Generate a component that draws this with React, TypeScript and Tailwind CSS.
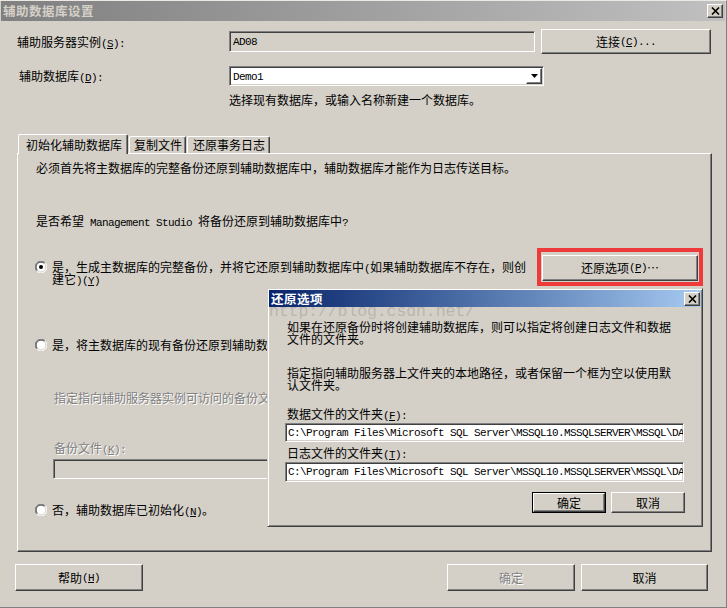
import React from "react";

const raised =
  "border border-t-white border-l-white border-r-[#404040] border-b-[#404040] shadow-[inset_-1px_-1px_0_#808080]";
const sunken =
  "border border-t-[#808080] border-l-[#808080] border-r-white border-b-white shadow-[inset_1px_1px_0_#404040,inset_-1px_-1px_0_#d4d0c8]";
const disabledText = "text-[#808080] [text-shadow:1px_1px_0_#ffffff]";

const M = ({ children }: { children: React.ReactNode }) => (
  <span className="font-['Liberation_Mono',monospace] text-[11px] tracking-[-0.6px]">{children}</span>
);
const U = ({ children }: { children: React.ReactNode }) => (
  <span className="underline underline-offset-1">{children}</span>
);

function Btn({ children, className }: { children: React.ReactNode; className?: string }) {
  return (
    <div className={`flex items-center justify-center bg-[#d4d0c8] whitespace-nowrap ${raised} ${className ?? ""}`}>
      {children}
    </div>
  );
}

function CloseBtn() {
  return (
    <div className={`w-[16px] h-[14px] bg-[#d4d0c8] flex items-center justify-center ${raised}`}>
      <svg width="9" height="8" viewBox="0 0 9 8">
        <path d="M1 0.5 L8 7.5 M8 0.5 L1 7.5" stroke="#000" strokeWidth="1.6" />
      </svg>
    </div>
  );
}

function Radio({ checked }: { checked?: boolean }) {
  return (
    <svg width="12" height="12" viewBox="0 0 12 12" className="shrink-0">
      <circle cx="6" cy="6" r="5.5" fill="#fff" />
      <path d="M10.2 1.8 A5.9 5.9 0 0 0 1.8 10.2" fill="none" stroke="#808080" strokeWidth="1" />
      <path d="M9.5 2.5 A4.9 4.9 0 0 0 2.5 9.5" fill="none" stroke="#404040" strokeWidth="1" />
      <path d="M1.8 10.2 A5.9 5.9 0 0 0 10.2 1.8" fill="none" stroke="#ffffff" strokeWidth="1" />
      <path d="M2.5 9.5 A4.9 4.9 0 0 0 9.5 2.5" fill="none" stroke="#d4d0c8" strokeWidth="1" />
      {checked && <circle cx="6" cy="6" r="2" fill="#000" />}
    </svg>
  );
}

const PATH = "C:\\Program Files\\Microsoft SQL Server\\MSSQL10.MSSQLSERVER\\MSSQL\\DATA";

export default function App() {
  return (
    <div className="relative w-[727px] h-[608px] overflow-hidden bg-[#d4d0c8] text-black text-[12px] leading-[12px] font-['Noto_Sans_CJK_SC',sans-serif] border-t border-t-[#ece9e4] border-r border-r-[#808080] border-b border-b-[#808080] flex flex-col">
      {/* title bar */}
      <div className="h-[20px] shrink-0 mx-[1px] flex items-center justify-between bg-linear-to-r from-[#808080] to-[#c0c0c0] pl-[2px] pr-[2px]">
        <span className="text-[#d4d0c8] font-bold text-[12.5px] tracking-[0.5px]">辅助数据库设置</span>
        <CloseBtn />
      </div>

      {/* row 1 */}
      <div className="mt-[8px] h-[25px] shrink-0 flex items-center">
        <div className="ml-[17px] w-[212px] h-[12px] whitespace-nowrap">
          辅助服务器实例<M>(<U>S</U>):</M>
        </div>
        <div className={`w-[306px] h-[21px] flex items-center pl-[3px] ${sunken}`}>
          <M>AD08</M>
        </div>
        <Btn className="ml-[6px] w-[170px] h-[25px]">
          连接<M>(<U>C</U>)...</M>
        </Btn>
      </div>

      {/* row 2 */}
      <div className="mt-[12px] h-[20px] shrink-0 flex items-center">
        <div className="ml-[19px] w-[210px] h-[12px] whitespace-nowrap">
          辅助数据库<M>(<U>D</U>):</M>
        </div>
        <div className={`w-[315px] h-[20px] bg-white p-[1px] flex items-center ${sunken}`}>
          <div className="flex-1 pl-[2px]">
            <M>Demo1</M>
          </div>
          <div className={`w-[16px] h-[16px] flex items-center justify-center ${raised}`}>
            <svg width="7" height="4" viewBox="0 0 7 4">
              <path d="M0 0 H7 L3.5 4 Z" fill="#000" />
            </svg>
          </div>
        </div>
      </div>

      <div className="mt-[8px] ml-[229px] h-[12px] shrink-0">选择现有数据库，或输入名称新建一个数据库。</div>

      {/* tabs */}
      <div className="mt-[28px] ml-[18px] h-[19px] shrink-0 flex items-end relative z-10">
        <div className="h-[20px] w-[110px] -mb-[1px] bg-[#d4d0c8] border-t border-l border-r border-t-white border-l-white border-r-[#404040] rounded-t-[2px] shadow-[inset_-1px_0_0_#808080] pt-[4px] pl-[7px] whitespace-nowrap">
          初始化辅助数据库
        </div>
        <div className="h-[17px] w-[57px] ml-[1px] border-t border-l border-r border-t-white border-l-white border-r-[#404040] rounded-t-[2px] shadow-[inset_-1px_0_0_#808080] pt-[2px] pl-[4px] whitespace-nowrap">
          复制文件
        </div>
        <div className="h-[17px] w-[83px] ml-[1px] border-t border-l border-r border-t-white border-l-white border-r-[#404040] rounded-t-[2px] shadow-[inset_-1px_0_0_#808080] pt-[2px] pl-[5px] whitespace-nowrap">
          还原事务日志
        </div>
      </div>

      {/* panel */}
      <div className={`ml-[17px] w-[695px] h-[399px] shrink-0 flex flex-col ${raised}`}>
        <div className="mt-[8px] ml-[18px] h-[12px] whitespace-nowrap">
          必须首先将主数据库的完整备份还原到辅助数据库中，辅助数据库才能作为日志传送目标。
        </div>
        <div className="mt-[41px] ml-[18px] h-[12px] whitespace-nowrap">
          是否希望<M> Management Studio </M>将备份还原到辅助数据库中<M>?</M>
        </div>
        <div className="mt-[34px] ml-[17px] h-[24px] flex items-start">
          <Radio checked />
          <div className="ml-[5px] w-[474px] h-[24px] whitespace-nowrap">
            <div className="h-[12px]">
              是，生成主数据库的完整备份，并将它还原到辅助数据库中<M>(</M>如果辅助数据库不存在，则创
            </div>
            <div className="h-[12px]">
              建它<M>)(<U>Y</U>)</M>
            </div>
          </div>
          <Btn className="ml-[16px] -mt-[6px] w-[156px] h-[26px]">
            还原选项<M>(<U>P</U>)</M>⋯
          </Btn>
        </div>
        <div className="mt-[54px] ml-[17px] h-[12px] flex items-start">
          <Radio />
          <div className="ml-[5px] w-[215px] h-[12px] overflow-hidden whitespace-nowrap">
            是，将主数据库的现有备份还原到辅助数据库<M>(<U>B</U>)</M>
          </div>
        </div>
        <div className={`mt-[41px] ml-[36px] w-[213px] h-[13px] overflow-hidden whitespace-nowrap ${disabledText}`}>
          指定指向辅助服务器实例可访问的备份文件。
        </div>
        <div className={`mt-[37px] ml-[36px] h-[12px] whitespace-nowrap ${disabledText}`}>
          备份文件<M>(<U>K</U>):</M>
        </div>
        <div className={`mt-[5px] ml-[35px] w-[640px] h-[20px] ${sunken}`}></div>
        <div className="mt-[25px] ml-[17px] h-[12px] flex items-start">
          <Radio />
          <div className="ml-[5px] h-[12px] whitespace-nowrap">
            否，辅助数据库已初始化<M>(<U>N</U>)</M>。
          </div>
        </div>
      </div>

      {/* bottom buttons */}
      <div className="mt-[12px] h-[27px] shrink-0 flex">
        <Btn className="ml-[15px] w-[128px] h-[27px]">
          帮助<M>(<U>H</U>)</M>
        </Btn>
        <Btn className={`ml-[304px] w-[128px] h-[27px] ${disabledText}`}>确定</Btn>
        <Btn className="ml-[6px] w-[127px] h-[27px]">取消</Btn>
      </div>

      {/* red highlight */}
      <div className="absolute left-[537px] top-[247px] w-[166px] h-[38px] border-[4px] border-[#ee3a3a] z-20"></div>

      {/* overlay dialog */}
      <div className="absolute left-[267px] top-[287px] w-[436px] h-[239px] bg-[#d4d0c8] p-[1px] border border-t-[#d4d0c8] border-l-[#d4d0c8] border-r-[#404040] border-b-[#404040] shadow-[inset_1px_1px_0_#fff,inset_-1px_-1px_0_#808080] flex flex-col z-30">
        <div className="relative z-10 h-[17px] shrink-0 flex items-center justify-between bg-linear-to-r from-[#0a246a] to-[#a6caf0] pl-[2px] pr-[1px]">
          <span className="text-white font-bold text-[12.5px] tracking-[0.5px]">还原选项</span>
          <CloseBtn />
        </div>
        <div className="absolute left-[1px] top-[15px] font-['Liberation_Mono',monospace] text-[16.5px] leading-none text-[#bab6ae] tracking-[-0.1px] z-0 whitespace-nowrap">
          http://blog.csdn.net/
        </div>
        <div className="relative mt-[14px] ml-[18px] h-[24px] whitespace-nowrap">
          <div className="h-[12px]">如果在还原备份时将创建辅助数据库，则可以指定将创建日志文件和数据</div>
          <div className="h-[12px]">文件的文件夹。</div>
        </div>
        <div className="mt-[22px] ml-[18px] h-[24px] whitespace-nowrap">
          <div className="h-[12px]">指定指向辅助服务器上文件夹的本地路径，或者保留一个框为空以使用默</div>
          <div className="h-[12px]">认文件夹。</div>
        </div>
        <div className="mt-[17px] ml-[18px] h-[12px] whitespace-nowrap">
          数据文件的文件夹<M>(<U>F</U>):</M>
        </div>
        <div className={`mt-[3px] ml-[16px] w-[399px] h-[19px] shrink-0 bg-white flex items-center pl-[2px] overflow-hidden whitespace-nowrap ${sunken}`}>
          <M>{PATH}</M>
        </div>
        <div className="mt-[5px] ml-[18px] h-[12px] whitespace-nowrap">
          日志文件的文件夹<M>(<U>T</U>):</M>
        </div>
        <div className={`mt-[3px] ml-[16px] w-[399px] h-[20px] shrink-0 bg-white flex items-center pl-[2px] overflow-hidden whitespace-nowrap ${sunken}`}>
          <M>{PATH}</M>
        </div>
        <div className="mt-[10px] flex justify-end pr-[16px] gap-[5px]">
          <div className="w-[74px] h-[21px] border border-black">
            <Btn className="w-full h-full">确定</Btn>
          </div>
          <Btn className="w-[74px] h-[21px]">取消</Btn>
        </div>
      </div>
    </div>
  );
}
